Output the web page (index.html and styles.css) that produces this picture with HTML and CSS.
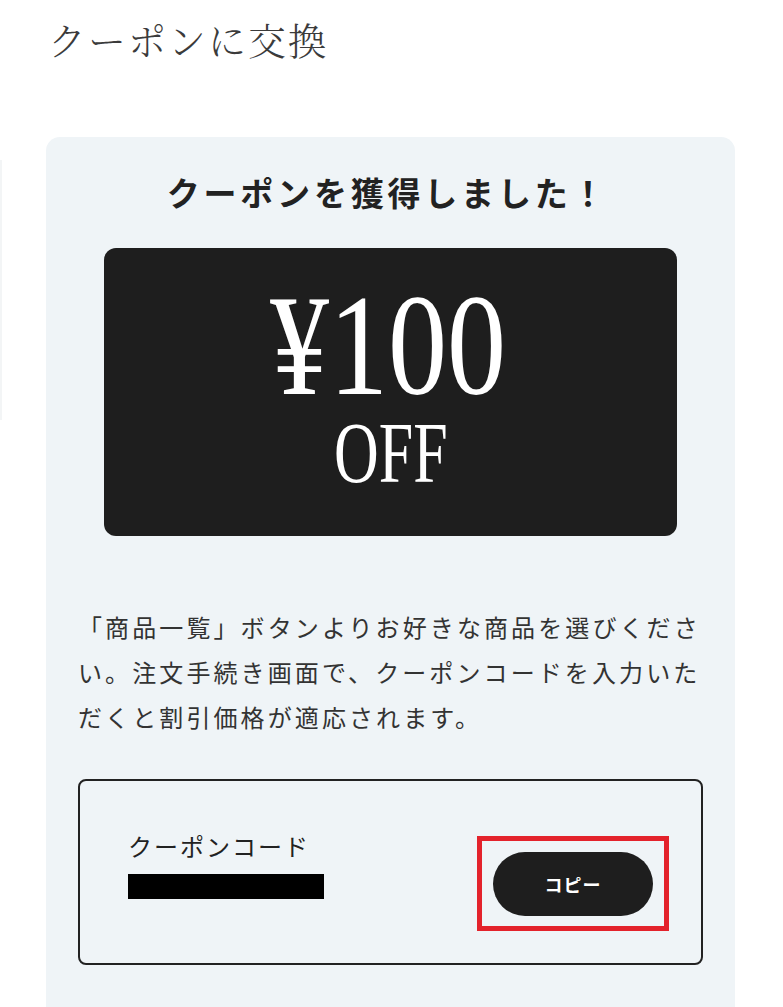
FILE: index.html
```html
<!DOCTYPE html>
<html lang="ja">
<head>
<meta charset="utf-8">
<title>クーポンに交換</title>
<link rel="stylesheet" href="styles.css">
</head>
<body>
<div class="edge"></div>
<h1 class="page-title">クーポンに交換</h1>
<section class="card">
  <h2 class="card-heading">クーポンを獲得しました！</h2>
  <div class="ticket">
    <span class="amount">¥100</span>
    <span class="off">OFF</span>
  </div>
  <p class="note">「商品一覧」ボタンよりお好きな商品を選びください。注文手続き画面で、クーポンコードを入力いただくと割引価格が適応されます。</p>
  <div class="code-box">
    <div class="code-info">
      <div class="code-label">クーポンコード</div>
      <div class="code-mask"></div>
    </div>
    <div class="highlight">
      <button class="copy-btn" type="button">コピー</button>
    </div>
  </div>
</section>
</body>
</html>
```

FILE: styles.css
```css
html, body {
  margin: 0;
  padding: 0;
  background: #ffffff;
}
body {
  font-family: "Noto Sans CJK JP", "Noto Sans", sans-serif;
  color: #333333;
  overflow: hidden;
  height: 1007px;
  position: relative;
}
.edge {
  position: absolute;
  left: 0;
  top: 160px;
  width: 2px;
  height: 260px;
  background: #f3f5f6;
}
.page-title {
  margin: 0;
  padding: 14px 0 0 48px;
  height: 137px;
  box-sizing: border-box;
  font-family: "Noto Serif CJK JP", "Noto Serif JP", "Noto Sans CJK JP", serif;
  font-size: 38px;
  line-height: 50px;
  font-weight: 300;
  letter-spacing: 2px;
  color: #3b3b3b;
}
.card {
  margin-left: 46px;
  width: 689px;
  box-sizing: border-box;
  background: #eff4f7;
  border-radius: 14px;
  padding: 32px 32px 60px;
}
.card-heading {
  margin: 0;
  text-align: center;
  font-size: 33px;
  line-height: 46px;
  font-weight: 700;
  letter-spacing: 3.8px;
  color: #222222;
  padding-right: 6px;
}
.ticket {
  margin: 33px 26px 0;
  height: 288px;
  background: #1e1e1e;
  border-radius: 12px;
  display: flex;
  flex-direction: column;
  align-items: center;
  padding-top: 38px;
  box-sizing: border-box;
  color: #ffffff;
  font-family: "Liberation Serif", "Times New Roman", serif;
}
.amount {
  display: block;
  font-size: 144px;
  line-height: 120px;
  transform: scaleX(0.82);
  margin-left: -6px;
}
.off {
  display: block;
  font-size: 86px;
  line-height: 70px;
  margin-top: 12px;
  transform: scaleX(0.72);
}
.note {
  margin: 68px 0 0;
  font-size: 24px;
  line-height: 45px;
  letter-spacing: 3.1px;
  color: #333333;
}
.code-box {
  margin-top: 40px;
  height: 186px;
  box-sizing: border-box;
  border: 2px solid #222222;
  border-radius: 8px;
  display: flex;
  justify-content: space-between;
  align-items: flex-start;
  padding: 0 32px 0 48px;
}
.code-info {
  padding-top: 48px;
}
.code-label {
  font-size: 24px;
  line-height: 34px;
  letter-spacing: 2px;
  color: #222222;
}
.code-mask {
  margin-top: 11px;
  width: 196px;
  height: 25px;
  background: #000000;
}
.highlight {
  margin-top: 55px;
  width: 192px;
  height: 95px;
  box-sizing: border-box;
  border: 5px solid #e3222b;
  display: flex;
  align-items: center;
  justify-content: center;
}
.copy-btn {
  width: 160px;
  height: 64px;
  border: none;
  border-radius: 32px;
  background: #1e1e1e;
  color: #ffffff;
  font-family: "Noto Sans CJK JP", "Noto Sans", sans-serif;
  font-size: 18px;
  font-weight: 700;
  letter-spacing: 1px;
  padding: 0;
}
```
